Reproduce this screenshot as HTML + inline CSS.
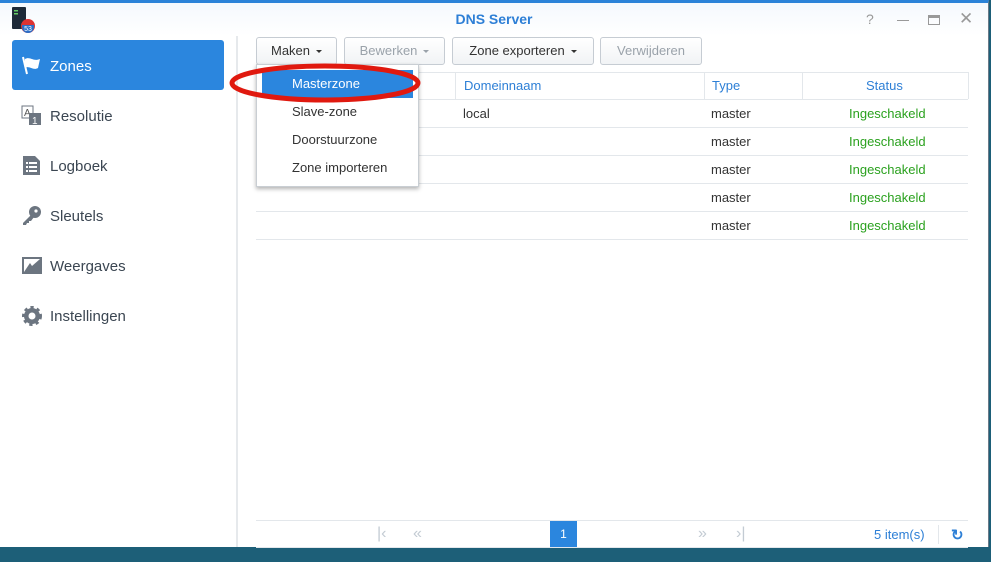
<!DOCTYPE html>
<html><head><style>
*{margin:0;padding:0;box-sizing:border-box}
body{width:991px;height:562px;overflow:hidden;font-family:"Liberation Sans",sans-serif;font-size:13px;color:#333;background:#1d5f78;position:relative}
.win{position:absolute;left:0;top:0;width:989px;height:547px;background:#fff;border-top:3px solid #2b83d8;border-right:1px solid #6a7a88}
.title{position:absolute;left:0;top:0;width:100%;height:33px;background:linear-gradient(#f5f9fd,#fff)}
.title h1{position:absolute;left:0;right:0;top:8px;text-align:center;font-size:14px;color:#2d7fd6;font-weight:bold}
.side{position:absolute;left:0;top:33px;width:238px;bottom:0;border-right:2px solid #e6e9ec}
.item{position:absolute;left:12px;width:212px;height:50px;font-size:15px;color:#3b4652;padding-left:38px;line-height:54px}
.item.act{background:#2b86de;color:#fff;border-radius:3px}
.ic{position:absolute;left:9px;top:15px;width:21px;height:21px}
.btn{position:absolute;top:34px;height:28px;border:1px solid #c6ccd3;border-radius:3px;background:linear-gradient(#fff,#f1f3f5);font-size:13px;line-height:26px;text-align:center;color:#333}
.btn.dis{color:#9aa2aa}
.car{display:inline-block;border-left:3px solid transparent;border-right:3px solid transparent;border-top:3px solid currentColor;vertical-align:middle;margin-left:6px}
.hl{position:absolute;height:1px;background:#e3e7eb}
.vl{position:absolute;width:1px;background:#e3e7eb}
.t{position:absolute;font-size:13px}
.blue{color:#2d7fd6}.green{color:#2aa11e}
.menu{position:absolute;left:256px;top:61px;width:163px;height:123px;background:#fff;border:1px solid #c9ced3;box-shadow:0 2px 4px rgba(0,0,0,.3)}
.menu div{height:28px;line-height:28px;padding-left:35px;font-size:13px;color:#333}
</style></head><body>
<div class="win">
<div class="title">
<svg style="position:absolute;left:11px;top:3px" width="25" height="27"><rect x="1" y="1" width="14" height="22" rx="1" fill="#1e2a38"/><rect x="3" y="4" width="4" height="1.5" fill="#6c6"/><rect x="3" y="7" width="4" height="1.5" fill="#6c6"/><circle cx="17" cy="20" r="7" fill="#d33"/><path d="M11 19h12v2a6 6 0 0 1-12 0z" fill="#2a6fc9"/><text x="17" y="25" font-size="7" fill="#fff" text-anchor="middle" font-family="Liberation Sans">53</text></svg>
<h1>DNS Server</h1>
<span style="position:absolute;left:866px;top:8px;color:#999;font-size:14px">?</span>
<div style="position:absolute;left:897px;top:17px;width:12px;height:1px;background:#999"></div>
<div style="position:absolute;left:928px;top:12px;width:12px;height:10px;border:1px solid #999;border-top-width:3px"></div>
<span style="position:absolute;left:959px;top:6px;color:#999;font-size:17px">✕</span>
</div>
<div class="side">
<div class="item act" style="top:4px"><svg class="ic" viewBox="0 0 21 21"><path d="M2 2l4 17" stroke="#fff" stroke-width="2"/><path d="M4 4c5-3 8 3 15 0l-2 9c-5 3-9-3-13 0z" fill="#fff"/></svg>Zones</div>
<div class="item" style="top:54px"><svg class="ic" viewBox="0 0 21 21"><rect x="1" y="1" width="11" height="12" fill="#fff" stroke="#6c7580"/><text x="3" y="11" font-size="10" fill="#555" font-family="Liberation Sans">A</text><rect x="8" y="8" width="12" height="12" fill="#6c7580"/><text x="11" y="19" font-size="10" fill="#fff" font-family="Liberation Sans">1</text></svg>Resolutie</div>
<div class="item" style="top:104px"><svg class="ic" viewBox="0 0 21 21"><path d="M2 1h12l5 5v14H2z" fill="#6c7580"/><g fill="#fff"><rect x="5" y="7" width="2" height="2"/><rect x="8" y="7" width="8" height="2"/><rect x="5" y="11" width="2" height="2"/><rect x="8" y="11" width="8" height="2"/><rect x="5" y="15" width="2" height="2"/><rect x="8" y="15" width="8" height="2"/></g></svg>Logboek</div>
<div class="item" style="top:154px"><svg class="ic" viewBox="0 0 21 21"><circle cx="14" cy="7" r="6" fill="#6c7580"/><path d="M10 10L2 18v2h3l1-2 2 0 0-2 2 0 3-4z" fill="#6c7580"/><circle cx="15" cy="6" r="1.6" fill="#fff"/></svg>Sleutels</div>
<div class="item" style="top:204px"><svg class="ic" viewBox="0 0 21 21"><rect x="1" y="2" width="20" height="17" fill="#6c7580"/><rect x="3" y="4" width="16" height="13" fill="#fff"/><path d="M3 17l6-9 2 3 8-7v13z" fill="#6c7580"/></svg>Weergaves</div>
<div class="item" style="top:254px"><svg class="ic" viewBox="0 0 21 21"><circle cx="11" cy="11" r="8" fill="#6c7580" stroke="#6c7580" stroke-width="4" stroke-dasharray="3 3"/><circle cx="11" cy="11" r="3.5" fill="#fff"/></svg>Instellingen</div>
</div>
<div class="btn" style="left:256px;width:81px">Maken<span class="car"></span></div>
<div class="btn dis" style="left:344px;width:101px">Bewerken<span class="car"></span></div>
<div class="btn" style="left:452px;width:142px">Zone exporteren<span class="car"></span></div>
<div class="btn dis" style="left:600px;width:102px">Verwijderen</div>
<div class="hl" style="left:256px;width:712px;top:69px"></div>
<div class="hl" style="left:256px;width:712px;top:96px"></div>
<div class="vl" style="left:455px;top:69px;height:27px"></div>
<div class="vl" style="left:704px;top:69px;height:27px"></div>
<div class="vl" style="left:802px;top:69px;height:27px"></div>
<div class="vl" style="left:968px;top:69px;height:27px"></div>
<span class="t blue" style="left:464px;top:75px">Domeinnaam</span>
<span class="t blue" style="left:712px;top:75px">Type</span>
<span class="t blue" style="left:866px;top:75px">Status</span>
<span class="t" style="left:463px;top:103px">local</span>
<div class="hl" style="left:256px;width:712px;top:124px"></div>
<div class="hl" style="left:256px;width:712px;top:152px"></div>
<div class="hl" style="left:256px;width:712px;top:180px"></div>
<div class="hl" style="left:256px;width:712px;top:208px"></div>
<div class="hl" style="left:256px;width:712px;top:236px"></div>
<span class="t" style="left:711px;top:103px">master</span><span class="t green" style="left:849px;top:103px">Ingeschakeld</span>
<span class="t" style="left:711px;top:131px">master</span><span class="t green" style="left:849px;top:131px">Ingeschakeld</span>
<span class="t" style="left:711px;top:159px">master</span><span class="t green" style="left:849px;top:159px">Ingeschakeld</span>
<span class="t" style="left:711px;top:187px">master</span><span class="t green" style="left:849px;top:187px">Ingeschakeld</span>
<span class="t" style="left:711px;top:215px">master</span><span class="t green" style="left:849px;top:215px">Ingeschakeld</span>
<div class="menu">
<div style="background:#2b86de;color:#fff;margin:5px 5px 0 5px;padding-left:30px">Masterzone</div>
<div>Slave-zone</div><div>Doorstuurzone</div><div>Zone importeren</div>
</div>
<svg style="position:absolute;left:228px;top:57px" width="200" height="46"><ellipse cx="97" cy="23" rx="93" ry="17" fill="none" stroke="#e0190f" stroke-width="5"/></svg>
<div class="hl" style="left:256px;width:712px;top:517px"></div>
<div class="hl" style="left:256px;width:712px;top:544px"></div>
<span class="t" style="left:377px;top:522px;color:#c3cbd3;font-size:16px">|‹</span>
<span class="t" style="left:413px;top:522px;color:#c3cbd3;font-size:16px">«</span>
<div style="position:absolute;left:550px;top:518px;width:27px;height:26px;background:#2b86de;color:#fff;text-align:center;line-height:26px;font-size:12px">1</div>
<span class="t" style="left:698px;top:522px;color:#c3cbd3;font-size:16px">»</span>
<span class="t" style="left:736px;top:522px;color:#c3cbd3;font-size:16px">›|</span>
<span class="t blue" style="left:874px;top:524px">5 item(s)</span>
<div class="vl" style="left:938px;top:522px;height:19px"></div>
<span class="t blue" style="left:951px;top:523px;font-size:15px;font-weight:bold">↻</span>
</div>
</body></html>
